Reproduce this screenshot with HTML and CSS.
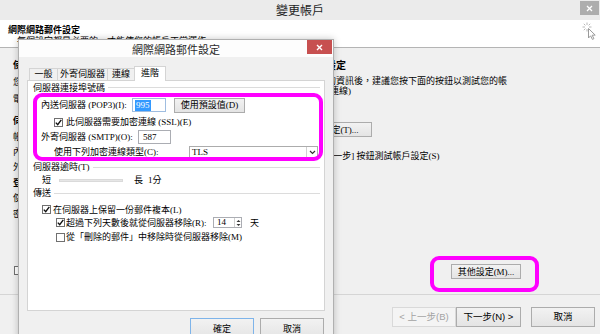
FILE: index.html
```html
<!DOCTYPE html>
<html lang="zh-Hant">
<head>
<meta charset="utf-8">
<title>變更帳戶</title>
<link rel="stylesheet" href="styles.css">
</head>
<body>
<div class="wizard">
  <header class="wz-titlebar">
    <span class="wz-title">變更帳戶</span>
    <span class="wz-close"><svg width="7" height="7" viewBox="0 0 7 7"><path d="M1 1L6 6M6 1L1 6" stroke="#fff" stroke-width="1.3"/></svg></span>
  </header>
  <section class="wz-head">
    <div class="wz-head-text">
      <h1>網際網路郵件設定</h1>
      <p>每個設定都是必要的，才能使您的帳戶正常運作。</p>
    </div>
    <svg class="wz-icon" width="15" height="18" viewBox="0 0 15 18">
      <g stroke="#b8b8b8" stroke-width="1" fill="none">
        <path d="M5 0.5V3M5 7V9.5M0.5 5H3M7 5H9.5M1.8 1.8L3.4 3.4M8.2 1.8L6.6 3.4M1.8 8.2L3.4 6.6"/>
        <path d="M6.5 6.5L6.5 16L8.6 13.8L10.4 17.4L11.9 16.7L10.2 13.2L13.2 13.1Z" fill="#fff" stroke="#9a9a9a"/>
      </g>
    </svg>
  </section>
  <main class="wz-body">
    <div class="wz-left">
      <div class="lbl bold m11">使用者資訊</div>
      <div class="lbl m5">您的名稱(Y):</div>
      <div class="lbl m5">電子郵件地址(E):</div>
      <div class="lbl bold m10">伺服器資訊</div>
      <div class="lbl m4">帳戶類型(A):</div>
      <div class="lbl m3">內送郵件伺服器(I):</div>
      <div class="lbl m3">外寄郵件伺服器 (SMTP)(O):</div>
      <div class="lbl bold m4">登入資訊</div>
      <div class="lbl m3">使用者名稱(U):</div>
      <div class="lbl m4">密碼(P):</div>
      <div class="lbl-chk"><span class="cb"></span><span class="lbl">記住密碼(R)</span></div>
    </div>
    <div class="wz-right">
      <h2>測試帳戶設定</h2>
      <p class="info">填寫此畫面上的資訊後，建議您按下面的按鈕以測試您的帳<br>戶。(需要網路連線)</p>
      <button class="btn btn-test">測試帳戶設定(T)...</button>
      <div class="chk-row"><span class="cb"><svg width="9" height="9" viewBox="0 0 9 9"><path d="M1.8 4.6L3.7 6.7L7.3 1.8" stroke="#111" stroke-width="1.4" fill="none"/></svg></span>按 [下一步] 按鈕測試帳戶設定(S)</div>
      <button class="btn btn-more">其他設定(M)...</button>
    </div>
  </main>
  <footer class="wz-foot">
    <button class="btn fbtn back" disabled>&lt; 上一步(B)</button>
    <button class="btn fbtn next">下一步(N) &gt;</button>
    <button class="btn fbtn cancel">取消</button>
  </footer>
</div>

<div class="dialog">
  <div class="dlg-titlebar">
    <span class="dlg-title">網際網路郵件設定</span>
    <span class="dlg-close"><svg width="7" height="7" viewBox="0 0 7 7"><path d="M1 1L6 6M6 1L1 6" stroke="#fff" stroke-width="1.4"/></svg></span>
  </div>
  <div class="dlg-body">
    <div class="tabs">
      <span class="tab t1">一般</span>
      <span class="tab t2">外寄伺服器</span>
      <span class="tab t3">連線</span>
      <span class="tab active">進階</span>
    </div>
    <div class="panel">
      <div class="group">伺服器連接埠號碼</div>
      <div class="row r1">
        <span class="lab w91">內送伺服器 (POP3)(I):</span>
        <span class="input focus i34"><span class="sel">995</span></span>
        <span class="btn dbtn">使用預設值(D)</span>
      </div>
      <div class="row r2">
        <span class="cb"><svg width="9" height="9" viewBox="0 0 9 9"><path d="M1.8 4.6L3.7 6.7L7.3 1.8" stroke="#111" stroke-width="1.4" fill="none"/></svg></span>
        <span class="ctext">此伺服器需要加密連線 (SSL)(E)</span>
      </div>
      <div class="row r3">
        <span class="lab w97">外寄伺服器 (SMTP)(O):</span>
        <span class="input i33">587</span>
      </div>
      <div class="row r4">
        <span class="lab w135">使用下列加密連線類型(C):</span>
        <span class="select">TLS<span class="drop"><svg width="7" height="5" viewBox="0 0 7 5"><path d="M1 1L3.5 3.5L6 1" stroke="#333" stroke-width="1.2" fill="none"/></svg></span></span>
      </div>
      <div class="group g2">伺服器逾時(T)</div>
      <div class="row r5">
        <span class="short">短</span>
        <span class="track"></span>
        <span class="long">長</span>
        <span class="mins">1分</span>
      </div>
      <div class="group g3">傳送</div>
      <div class="row r6">
        <span class="cb"><svg width="9" height="9" viewBox="0 0 9 9"><path d="M1.8 4.6L3.7 6.7L7.3 1.8" stroke="#111" stroke-width="1.4" fill="none"/></svg></span>
        <span class="ctext c2">在伺服器上保留一份郵件複本(L)</span>
      </div>
      <div class="row r7">
        <span class="cb"><svg width="9" height="9" viewBox="0 0 9 9"><path d="M1.8 4.6L3.7 6.7L7.3 1.8" stroke="#111" stroke-width="1.4" fill="none"/></svg></span>
        <span class="ctext w147">超過下列天數後就從伺服器移除(R):</span>
        <span class="spin">14<span class="arrows"><svg width="5" height="8" viewBox="0 0 5 8"><path d="M0.5 3L2.5 1L4.5 3ZM0.5 5L2.5 7L4.5 5Z" fill="#333"/></svg></span></span>
        <span class="day">天</span>
      </div>
      <div class="row r8">
        <span class="cb"></span>
        <span class="ctext">從「刪除的郵件」中移除時從伺服器移除(M)</span>
      </div>
    </div>
    <div class="dlg-buttons">
      <span class="btn dfoot default">確定</span>
      <span class="btn dfoot">取消</span>
    </div>
  </div>
</div>

<div class="hl hl-ports"></div>
<div class="hl hl-more"></div>
</body>
</html>
```

FILE: styles.css
```css
* { box-sizing: border-box; margin: 0; padding: 0; }
html, body { width: 600px; height: 334px; overflow: hidden; }
body {
  position: relative;
  background: #f0f0f0;
  color: #000;
  font-family: "Liberation Serif", "Noto Sans CJK TC", serif;
  font-size: 9px;
  line-height: 12px;
}
button { font: inherit; color: inherit; background: none; border: none; }

/* ---------- wizard (background window) ---------- */
.wizard { width: 600px; height: 334px; display: flex; flex-direction: column; }

.wz-titlebar {
  height: 20px; flex: none; background: #ebebeb;
  display: grid; grid-template-columns: 1fr auto 1fr; align-items: start;
}
.wz-title {
  grid-column: 2;
  font-family: "Noto Sans CJK TC", sans-serif;
  font-size: 12px; line-height: 20px; color: #1e1e1e;
}
.wz-close {
  grid-column: 3; justify-self: end;
  margin: 1px 1px 0 0; width: 19px; height: 14px;
  background: #adadad;
  display: flex; align-items: center; justify-content: center;
}

.wz-head {
  height: 28px; flex: none; background: #fff;
  border-bottom: 1px solid #b4b4b4;
  display: flex; justify-content: space-between;
}
.wz-head h1 {
  font-family: "Noto Sans CJK TC", sans-serif;
  font-size: 9px; font-weight: 700; line-height: 11px;
  margin: 4px 0 0 8px;
}
.wz-head p { margin-left: 17px; line-height: 12px; }
.wz-icon { margin: 2px 3px 0 0; }

.wz-body {
  height: 247px; flex: none;
  border-bottom: 1px solid #d5d5d5;
  display: flex;
}
.wz-left { width: 273px; flex: none; padding-left: 13px; display: flex; flex-direction: column; }
.lbl { line-height: 12px; white-space: nowrap; }
.lbl.bold { font-family: "Noto Sans CJK TC", sans-serif; font-weight: 700; }
.m3 { margin-top: 3px; } .m4 { margin-top: 4px; } .m5 { margin-top: 5px; }
.m10 { margin-top: 10px; } .m11 { margin-top: 11px; }
.lbl-chk { margin-top: 44px; padding-left: 1px; display: flex; align-items: center; gap: 4px; line-height: 12px; }

.cb {
  width: 9px; height: 9px; flex: none;
  background: #fff; border: 1px solid #707070;
  display: flex; align-items: center; justify-content: center;
}
.cb svg { display: block; margin: -1px; }

.wz-right { flex: 1; display: flex; flex-direction: column; align-items: flex-start; }
.wz-right h2 {
  font-family: "Noto Sans CJK TC", sans-serif;
  font-size: 10px; font-weight: 700; line-height: 12px;
  margin-top: 11px; padding-left: 13px;
}
.info { margin-top: 6px; line-height: 9.5px; white-space: nowrap; }

.btn {
  background: linear-gradient(#f2f2f2, #e4e4e4);
  border: 1px solid #acacac;
  text-align: center; white-space: nowrap;
  display: flex; align-items: center; justify-content: center;
}
.btn-test { margin-top: 26px; width: 99px; height: 15px; }
.chk-row { margin-top: 13px; padding-left: 24px; display: flex; align-items: center; gap: 4px; line-height: 12px; white-space: nowrap; }
.btn-more { margin-top: 102px; margin-left: 178px; width: 70px; height: 15px; }

.wz-foot {
  flex: 1; display: flex; justify-content: flex-end; align-items: flex-start;
  padding: 12px 5px 0 0;
  font-family: "Liberation Sans", "Noto Sans CJK TC", sans-serif; font-size: 9.5px;
}
.fbtn { height: 20px; }
.back { width: 64px; color: #a3a3a3; border-color: #d9d9d9; background: #f4f4f4; }
.next { width: 65px; }
.cancel { width: 64px; margin-left: 10px; }

/* ---------- dialog ---------- */
.dialog {
  position: absolute; left: 18px; top: 39px;
  width: 316px; height: 302px;
  background: #f0f0f0;
  border: 1px solid #b0b0b0;
  box-shadow: 0 0 7px rgba(0, 0, 0, 0.22);
  display: flex; flex-direction: column;
}
.dlg-titlebar {
  height: 17px; flex: none; background: #fdfdfd;
  display: grid; grid-template-columns: 1fr auto 1fr; align-items: start;
}
.dlg-title {
  grid-column: 2;
  font-family: "Noto Sans CJK TC", sans-serif;
  font-size: 11px; line-height: 18px; color: #2a2a2a;
}
.dlg-close {
  grid-column: 3; justify-self: end;
  margin-right: 1px; width: 25px; height: 14px;
  background: #c75050;
  display: flex; align-items: center; justify-content: center;
}
.dlg-body { padding: 9px 8px 0 8px; display: flex; flex-direction: column; }

.tabs { display: flex; align-items: flex-end; height: 14px; padding-left: 2px; }
.tab {
  height: 12px; border: 1px solid #d4d4d4; border-bottom: none;
  background: #f0f0f0; text-align: center; line-height: 11px; white-space: nowrap;
}
.t1 { width: 29px; }
.t2 { width: 51px; margin-left: -1px; }
.t3 { width: 28px; margin-left: -1px; }
.tab.active {
  width: 32px; height: 15px; margin: 0 0 -1px -1px;
  background: #fff; line-height: 13px;
  position: relative; z-index: 1;
}

.panel {
  height: 231px; background: #fff; border: 1px solid #d4d4d4;
  padding: 0 4px 0 5px;
  display: flex; flex-direction: column;
}
.group { height: 13px; display: flex; align-items: center; white-space: nowrap; }
.group::after { content: ""; flex: 1; height: 1px; background: #dcdcdc; margin-left: 3px; }
.g2, .g3 { height: 12px; }

.row { display: flex; align-items: center; white-space: nowrap; }
.lab { flex: none; }
.w91 { width: 91px; } .w97 { width: 97px; } .w135 { width: 135px; } .w147 { width: 147px; }

.r1 { margin-top: 2px; height: 18px; padding-left: 8px; }
.r2 { height: 16px; padding-left: 21px; }
.r3 { height: 13px; padding-left: 8px; }
.r4 { height: 18px; padding-left: 21px; }
.r5 { height: 14px; padding-left: 9px; }
.r6 { margin-top: 4px; height: 13px; padding-left: 9px; }
.r7 { height: 13px; padding-left: 23px; }
.r8 { height: 16px; padding-left: 23px; }

.ctext { margin-left: 3px; }
.c2 { margin-left: 2px; }
.r7 .ctext, .r8 .ctext { margin-left: 1px; }

.input {
  height: 14px; background: #fff; border: 1px solid #abadb3;
  padding-left: 2px; display: flex; align-items: center; flex: none;
}
.input.focus { border-color: #9fbde0; }
.i34 { width: 34px; } .i33 { width: 33px; padding-left: 4px; }
.sel { background: #3399ff; color: #fff; padding: 0 1px; line-height: 11px; }
.dbtn { width: 71px; height: 15px; margin-left: 8px; }

.select {
  width: 129px; height: 12px; background: #fff; border: 1px solid #acacac;
  padding-left: 2px; display: flex; align-items: center; justify-content: space-between;
  line-height: 10px;
}
.drop {
  width: 11px; height: 10px; border-left: 1px solid #d0d0d0;
  display: flex; align-items: center; justify-content: center;
}

.short { width: 17px; }
.track { width: 64px; height: 3px; background: #e6e6e6; border: 1px solid #dadada; }
.long { margin-left: 11px; }
.mins { margin-left: 5px; }

.spin {
  width: 29px; height: 11px; border: 1px solid #abadb3; background: #fff;
  padding-left: 3px; display: flex; align-items: center; justify-content: space-between;
  line-height: 9px;
}
.arrows { width: 7px; height: 9px; border-left: 1px solid #d0d0d0; display: flex; align-items: center; justify-content: center; }
.day { margin-left: 8px; }

.dlg-buttons { margin-top: 7px; display: flex; justify-content: flex-end; gap: 6px; padding-right: 1px; }
.dfoot { width: 64px; height: 22px; }
.dfoot.default { border-color: #7eb4ea; }

/* ---------- magenta highlights ---------- */
.hl { position: absolute; border: 4px solid #ff00ff; border-radius: 9px; }
.hl-ports { left: 33px; top: 93px; width: 290px; height: 68px; }
.hl-more { left: 430px; top: 256px; width: 109px; height: 36px; }
```
